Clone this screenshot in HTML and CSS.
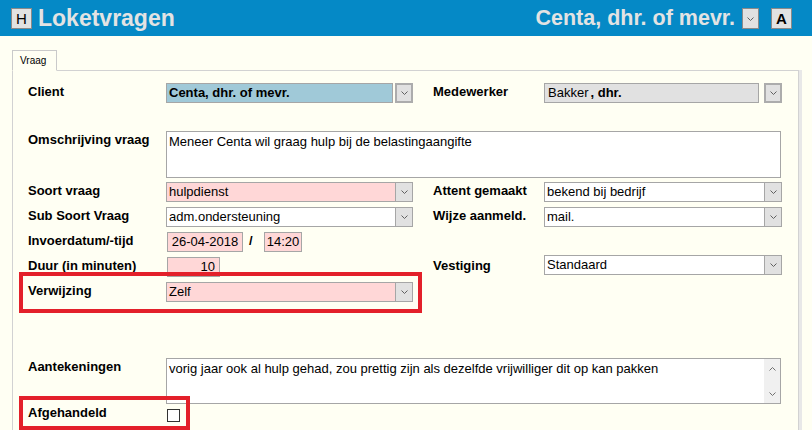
FILE: index.html
```html
<!DOCTYPE html>
<html lang="nl">
<head>
<meta charset="utf-8">
<title>Loketvragen</title>
<link rel="stylesheet" href="styles.css">
</head>
<body>
<header class="topbar">
  <div class="hbtn">H</div>
  <h1 class="title">Loketvragen</h1>
  <div class="spacer"></div>
  <span class="who">Centa, dhr. of mevr.</span>
  <span class="dd dd-top"><svg width="7" height="4" viewBox="0 0 7 4"><polyline points="0.5,0.5 3.5,3.5 6.5,0.5" fill="none" stroke="#606060" stroke-width="1"/></svg></span>
  <div class="abtn">A</div>
</header>
<main class="content">
  <div class="tabs"><div class="tab">Vraag</div></div>
  <section class="panel">
    <div class="row r1">
      <div class="lbl">Client</div>
      <div class="field gap">
        <div class="box blue bold">Centa, dhr. of mevr.</div>
        <span class="dd sep"><svg width="7" height="4" viewBox="0 0 7 4"><polyline points="0.5,0.5 3.5,3.5 6.5,0.5" fill="none" stroke="#606060" stroke-width="1"/></svg></span>
      </div>
      <div class="lbl lbl2">Medewerker</div>
      <div class="field gap gap-r">
        <div class="box gray">Bakker<b>, dhr.</b></div>
        <span class="dd sep"><svg width="7" height="4" viewBox="0 0 7 4"><polyline points="0.5,0.5 3.5,3.5 6.5,0.5" fill="none" stroke="#606060" stroke-width="1"/></svg></span>
      </div>
    </div>

    <div class="row r2">
      <div class="lbl">Omschrijving vraag</div>
      <div class="area area1">Meneer Centa wil graag hulp bij de belastingaangifte</div>
    </div>

    <div class="row r3">
      <div class="lbl">Soort vraag</div>
      <div class="field">
        <div class="box pink">hulpdienst</div>
        <span class="dd att"><svg width="7" height="4" viewBox="0 0 7 4"><polyline points="0.5,0.5 3.5,3.5 6.5,0.5" fill="none" stroke="#606060" stroke-width="1"/></svg></span>
      </div>
      <div class="lbl lbl2">Attent gemaakt</div>
      <div class="field fr">
        <div class="box">bekend bij bedrijf</div>
        <span class="dd att"><svg width="7" height="4" viewBox="0 0 7 4"><polyline points="0.5,0.5 3.5,3.5 6.5,0.5" fill="none" stroke="#606060" stroke-width="1"/></svg></span>
      </div>
    </div>

    <div class="row r4">
      <div class="lbl">Sub Soort Vraag</div>
      <div class="field">
        <div class="box">adm.ondersteuning</div>
        <span class="dd att"><svg width="7" height="4" viewBox="0 0 7 4"><polyline points="0.5,0.5 3.5,3.5 6.5,0.5" fill="none" stroke="#606060" stroke-width="1"/></svg></span>
      </div>
      <div class="lbl lbl2">Wijze aanmeld.</div>
      <div class="field fr">
        <div class="box">mail.</div>
        <span class="dd att"><svg width="7" height="4" viewBox="0 0 7 4"><polyline points="0.5,0.5 3.5,3.5 6.5,0.5" fill="none" stroke="#606060" stroke-width="1"/></svg></span>
      </div>
    </div>

    <div class="row r5">
      <div class="lbl">Invoerdatum/-tijd</div>
      <div class="datetime">
        <div class="box pink date">26-04-2018</div>
        <span class="slash">/</span>
        <div class="box pink time">14:20</div>
      </div>
    </div>

    <div class="row r6">
      <div class="lbl">Duur (in minuten)</div>
      <div class="datetime">
        <div class="box pink dur">10</div>
      </div>
      <div class="lbl lbl2">Vestiging</div>
      <div class="field fr up">
        <div class="box">Standaard</div>
        <span class="dd att"><svg width="7" height="4" viewBox="0 0 7 4"><polyline points="0.5,0.5 3.5,3.5 6.5,0.5" fill="none" stroke="#606060" stroke-width="1"/></svg></span>
      </div>
    </div>

    <div class="row r7">
      <div class="lbl">Verwijzing</div>
      <div class="field">
        <div class="box pink">Zelf</div>
        <span class="dd att"><svg width="7" height="4" viewBox="0 0 7 4"><polyline points="0.5,0.5 3.5,3.5 6.5,0.5" fill="none" stroke="#606060" stroke-width="1"/></svg></span>
      </div>
    </div>

    <div class="row r8">
      <div class="lbl">Aantekeningen</div>
      <div class="area area2">
        <div class="area-text">vorig jaar ook al hulp gehad, zou prettig zijn als dezelfde vrijwilliger dit op kan pakken</div>
        <div class="scroll">
          <svg width="7" height="4" viewBox="0 0 7 4"><polyline points="0.5,3.5 3.5,0.5 6.5,3.5" fill="none" stroke="#707070" stroke-width="1"/></svg>
          <svg width="7" height="4" viewBox="0 0 7 4"><polyline points="0.5,0.5 3.5,3.5 6.5,0.5" fill="none" stroke="#707070" stroke-width="1"/></svg>
        </div>
      </div>
    </div>

    <div class="row r9">
      <div class="lbl">Afgehandeld</div>
      <div class="chkwrap"><span class="chk"></span></div>
    </div>

    <div class="mark mark1"></div>
    <div class="mark mark2"></div>
  </section>
</main>
</body>
</html>
```

FILE: styles.css
```css
html, body {
  margin: 0;
  padding: 0;
}
body {
  background: #fffff3;
  font-family: "Liberation Sans", Arial, sans-serif;
  font-size: 13px;
  color: #000;
  overflow: hidden;
  height: 430px;
}

/* header */
.topbar {
  height: 36px;
  background: #0589c6;
  display: flex;
  align-items: center;
  padding: 0 20px 0 11px;
  box-sizing: border-box;
}
.hbtn, .abtn {
  width: 21px;
  height: 21px;
  box-sizing: border-box;
  background: #e2e2e2;
  border: 1px solid #8a8a8a;
  display: flex;
  align-items: center;
  justify-content: center;
  font-size: 15px;
  color: #000;
  margin-top: 1px;
}
.abtn {
  font-weight: bold;
  margin-left: 12px;
}
.title {
  margin: 0 0 0 6px;
  font-size: 23px;
  font-weight: bold;
  color: #e3e3e3;
  line-height: 36px;
}
.spacer { flex: 1; }
.who {
  font-size: 21.5px;
  font-weight: bold;
  color: #e3e3e3;
  margin-right: 7px;
  line-height: 36px;
}
.dd {
  display: flex;
  align-items: center;
  justify-content: center;
  box-sizing: border-box;
  background: #e1e1e1;
  flex: none;
}
.dd-top {
  width: 17px;
  height: 21px;
  border: 1px solid #8a8a8a;
  margin-top: 1px;
}

/* tabs */
.content {
  padding: 14px 0 0 12px;
}
.tabs {
  display: flex;
}
.tab {
  position: relative;
  z-index: 1;
  width: 45px;
  height: 21px;
  box-sizing: border-box;
  border: 1px solid #cacaca;
  border-bottom: 1px solid #fffff3;
  margin-bottom: -1px;
  background: #fffff3;
  font-size: 10px;
  line-height: 19px;
  padding-left: 7px;
  color: #000;
}
.panel {
  position: relative;
  width: 787px;
  height: 360px;
  box-sizing: border-box;
  border: 1px solid #d2d2d2;
  border-bottom: none;
  box-shadow: 3px 0 0 #e8e8e8;
  padding: 12px 0 0 15px;
}

/* rows */
.row {
  display: grid;
  grid-template-columns: 138px 247px 19px 112px 237px;
  align-items: start;
}
.r1 { height: 20px; }
.r2 { margin-top: 28px; }
.r3 { margin-top: 4px; height: 20px; }
.r4 { margin-top: 5px; height: 20px; }
.r5 { margin-top: 5px; height: 20px; }
.r6 { margin-top: 5px; height: 20px; }
.r7 { margin-top: 5px; height: 20px; }
.r8 { margin-top: 56px; }
.r9 { margin-top: 0; height: 20px; }

.lbl {
  grid-column: 1;
  font-weight: bold;
  font-size: 13px;
  line-height: 18px;
  white-space: nowrap;
}
.lbl2 {
  grid-column: 4;
  padding-left: 1px;
}

.field {
  display: flex;
  height: 20px;
}
.field.fr {
  grid-column: 5;
  width: 238px;
}
.field.up {
  margin-top: -2px;
}
.field.gap-r {
  grid-column: 5;
}
.box {
  flex: 1;
  min-width: 0;
  height: 20px;
  box-sizing: border-box;
  border: 1px solid #a6a6a6;
  background: #fff;
  padding: 0 0 0 2px;
  line-height: 18px;
  font-size: 13px;
  white-space: nowrap;
  overflow: hidden;
}
.blue { background: #a0c9d8; }
.gray { background: #e1e1e1; padding-left: 3px; }
.pink { background: #ffd7d7; }
.bold { font-weight: bold; }
.gray b { margin-left: 2px; }

.dd.att {
  width: 17px;
  height: 20px;
  border: 1px solid #a6a6a6;
  border-left: none;
}
.dd.sep {
  width: 18px;
  height: 20px;
  border: 2px solid #acacac;
}
.field.gap .dd.sep { margin-left: 2px; }
.field.gap-r .dd.sep { margin-left: 5px; }
.field.gap-r .box { flex: none; width: 215px; }

/* text areas */
.area {
  grid-column: 2 / -1;
  box-sizing: border-box;
  border: 1px solid #a6a6a6;
  background: #fff;
  font-size: 13px;
  line-height: 15px;
}
.area1 {
  height: 47px;
  padding: 2px 2px;
}
.area2 {
  height: 46px;
  display: flex;
}
.area-text {
  flex: 1;
  padding: 2px 2px;
}
.scroll {
  width: 16px;
  background: #f0f0f0;
  display: flex;
  flex-direction: column;
  align-items: center;
  justify-content: space-between;
  padding: 8px 0 7px;
  box-sizing: border-box;
}

/* date/time */
.datetime {
  grid-column: 2;
  display: flex;
  align-items: flex-start;
  padding-left: 1px;
}
.date {
  flex: none;
  width: 76px;
  text-align: center;
  padding: 0;
}
.slash {
  font-weight: bold;
  width: 21px;
  padding-left: 6px;
  box-sizing: border-box;
  line-height: 18px;
}
.time {
  flex: none;
  width: 38px;
  text-align: center;
  padding: 0;
}
.dur {
  flex: none;
  width: 53px;
  text-align: right;
  padding: 0 4px 0 0;
}

/* checkbox */
.chkwrap {
  grid-column: 2;
  padding: 5px 0 0 1px;
}
.chk {
  display: block;
  width: 13px;
  height: 13px;
  box-sizing: border-box;
  border: 1px solid #333;
  background: #fff;
}

/* annotation overlays */
.mark {
  position: absolute;
  border: 4px solid #e3202a;
  box-sizing: border-box;
  pointer-events: none;
}
.mark1 {
  left: 6px;
  top: 201px;
  width: 403px;
  height: 41px;
}
.mark2 {
  left: 6px;
  top: 325px;
  width: 171px;
  height: 34px;
}
```
